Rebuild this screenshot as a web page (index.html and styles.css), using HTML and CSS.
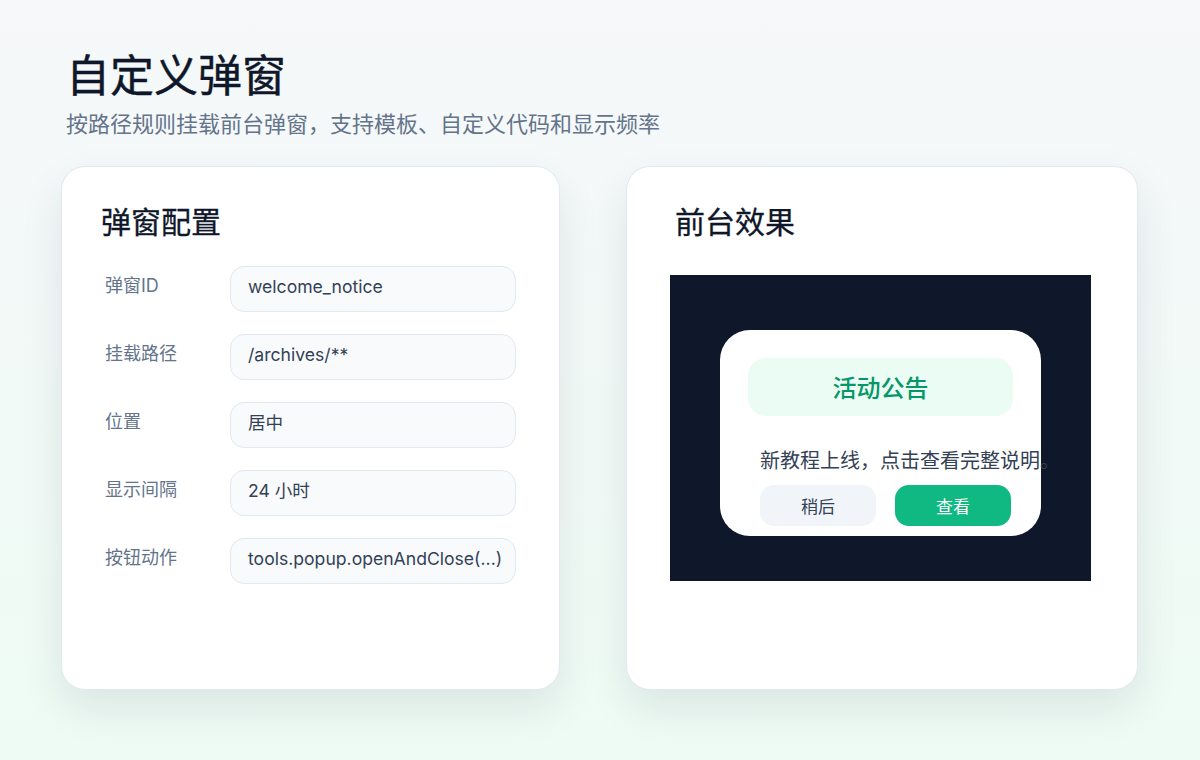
FILE: index.html
```html
<!DOCTYPE html>
<html lang="zh-CN">
<head>
<meta charset="utf-8">
<title>自定义弹窗</title>
<link rel="stylesheet" href="styles.css">
</head>
<body>
<div class="page">
  <header class="head">
    <h1 class="title">自定义弹窗</h1>
    <p class="subtitle">按路径规则挂载前台弹窗，支持模板、自定义代码和显示频率</p>
  </header>
  <main class="cards">
    <section class="card card-config">
      <h2 class="card-title">弹窗配置</h2>
      <div class="form">
        <div class="row"><span class="label">弹窗ID</span><div class="field">welcome_notice</div></div>
        <div class="row"><span class="label">挂载路径</span><div class="field">/archives/**</div></div>
        <div class="row"><span class="label">位置</span><div class="field">居中</div></div>
        <div class="row"><span class="label">显示间隔</span><div class="field">24 小时</div></div>
        <div class="row"><span class="label">按钮动作</span><div class="field">tools.popup.openAndClose(...)</div></div>
      </div>
    </section>
    <section class="card card-preview">
      <h2 class="card-title preview-title">前台效果</h2>
      <div class="stage">
        <div class="popup">
          <div class="popup-head">活动公告</div>
          <p class="popup-text">新教程上线，点击查看完整说明。</p>
          <div class="popup-actions">
            <span class="btn btn-later">稍后</span>
            <span class="btn btn-view">查看</span>
          </div>
        </div>
      </div>
    </section>
  </main>
</div>
</body>
</html>
```

FILE: styles.css
```css
* { box-sizing: border-box; }
html, body {
  margin: 0;
  padding: 0;
}
body {
  width: 1200px;
  height: 760px;
  overflow: hidden;
  background: linear-gradient(180deg, #f6f8fa 0%, #eefbf4 100%);
  font-family: Inter, "Noto Sans CJK SC", sans-serif;
}
.page {
  padding: 47px 61px 0;
}
.head {
  margin-left: 5px;
}
.title {
  margin: 0;
  font-family: "Noto Sans CJK SC", sans-serif;
  font-size: 44px;
  line-height: 52px;
  font-weight: 400;
  color: #0f172a;
  -webkit-text-stroke: 0.4px #0f172a;
}
.subtitle {
  margin: 8px 0 0;
  font-family: "Noto Sans CJK SC", sans-serif;
  font-size: 22px;
  line-height: 30px;
  color: #64748b;
}
.cards {
  display: flex;
  gap: 66px;
  margin-top: 29px;
}
.card {
  height: 524px;
  background: #ffffff;
  border: 1px solid #e2e8f0;
  border-radius: 24px;
  box-shadow: 0 18px 44px rgba(15, 23, 42, 0.09);
  padding-top: 33px;
}
.card-config {
  width: 499px;
  padding-left: 39px;
}
.card-preview {
  width: 512px;
  padding-left: 43px;
}
.card-title {
  margin: 0;
  font-family: "Noto Sans CJK SC", sans-serif;
  font-size: 30px;
  line-height: 40px;
  font-weight: 400;
  color: #0f172a;
  -webkit-text-stroke: 0.3px #0f172a;
}
.preview-title {
  padding-left: 5px;
}
.form {
  margin-top: 26px;
  margin-left: 4px;
  display: flex;
  flex-direction: column;
  gap: 22px;
}
.row {
  display: flex;
  align-items: center;
  height: 46px;
}
.label {
  width: 125px;
  flex: none;
  font-size: 18px;
  line-height: 24px;
  color: #64748b;
  padding-bottom: 6px;
}
.field {
  width: 286px;
  height: 46px;
  border: 1px solid #e2e8f0;
  background: #f8fafc;
  border-radius: 14px;
  padding-left: 17px;
  font-size: 17.6px;
  line-height: 39px;
  color: #334155;
  white-space: nowrap;
}
.stage {
  margin-top: 35px;
  width: 421px;
  height: 306px;
  background: #0f172a;
  padding: 55px 0 0 50px;
}
.popup {
  width: 321px;
  height: 206px;
  background: #ffffff;
  border-radius: 30px;
  padding: 28px 28px 10px;
}
.popup-head {
  height: 58px;
  border-radius: 18px;
  background: #eafcf3;
  color: #059669;
  font-family: "Noto Sans CJK SC", sans-serif;
  font-size: 24px;
  font-weight: 500;
  line-height: 58px;
  text-align: center;
}
.popup-text {
  margin: 30px 0 0;
  padding-left: 12px;
  font-family: "Noto Sans CJK SC", sans-serif;
  font-size: 20px;
  line-height: 28px;
  color: #334155;
  white-space: nowrap;
}
.popup-actions {
  margin-top: 11px;
  padding-left: 12px;
  display: flex;
  gap: 19px;
}
.btn {
  width: 116px;
  height: 41px;
  border-radius: 14px;
  font-family: "Noto Sans CJK SC", sans-serif;
  font-size: 17px;
  line-height: 41px;
  text-align: center;
}
.btn-later {
  background: #f1f5f9;
  color: #334155;
}
.btn-view {
  background: #10b981;
  color: #ffffff;
}
```
